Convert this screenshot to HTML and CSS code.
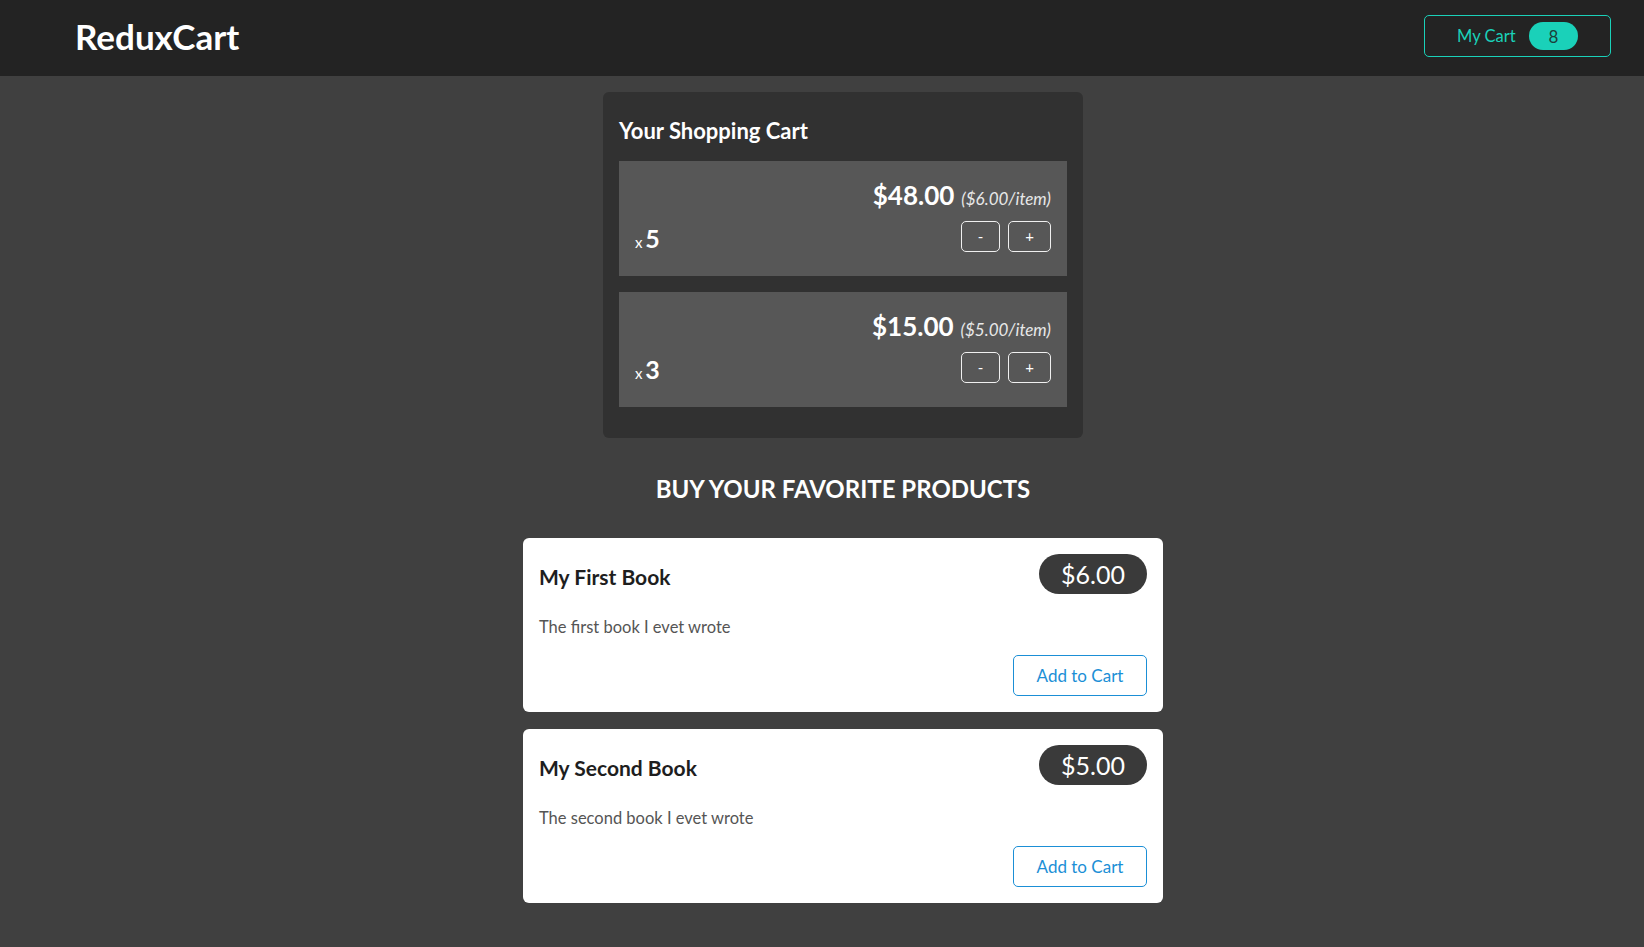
FILE: index.html
```html
<!DOCTYPE html>
<html lang="en">
<head>
<meta charset="utf-8">
<title>ReduxCart</title>
<link rel="stylesheet" href="styles.css">
</head>
<body>
<header class="topbar">
  <h1 class="logo">ReduxCart</h1>
  <button class="cart-toggle">
    <span>My Cart</span>
    <span class="badge">8</span>
  </button>
</header>
<main class="main">
  <section class="cart">
    <h2 class="cart-title">Your Shopping Cart</h2>
    <ul class="cart-list">
      <li class="cart-item">
        <div class="item-price-row">
          <span class="total">$48.00</span>
          <span class="per-item">($6.00/item)</span>
        </div>
        <div class="item-details">
          <div class="qty">x <span class="qty-num">5</span></div>
          <div class="actions">
            <button class="qbtn minus">-</button>
            <button class="qbtn plus">+</button>
          </div>
        </div>
      </li>
      <li class="cart-item">
        <div class="item-price-row">
          <span class="total">$15.00</span>
          <span class="per-item">($5.00/item)</span>
        </div>
        <div class="item-details">
          <div class="qty">x <span class="qty-num">3</span></div>
          <div class="actions">
            <button class="qbtn minus">-</button>
            <button class="qbtn plus">+</button>
          </div>
        </div>
      </li>
    </ul>
  </section>

  <section class="products">
    <h2 class="products-title">BUY YOUR FAVORITE PRODUCTS</h2>
    <ul class="product-list">
      <li class="product">
        <div class="product-head">
          <h3 class="product-name">My First Book</h3>
          <div class="price-pill">$6.00</div>
        </div>
        <p class="product-desc">The first book I evet wrote</p>
        <div class="product-actions">
          <button class="add-btn">Add to Cart</button>
        </div>
      </li>
      <li class="product">
        <div class="product-head">
          <h3 class="product-name">My Second Book</h3>
          <div class="price-pill">$5.00</div>
        </div>
        <p class="product-desc">The second book I evet wrote</p>
        <div class="product-actions">
          <button class="add-btn">Add to Cart</button>
        </div>
      </li>
    </ul>
  </section>
</main>
</body>
</html>
```
FILE: styles.css
```css
* { box-sizing: border-box; }
html, body { margin: 0; padding: 0; }
body {
  background: #404040;
  font-family: Lato, "Liberation Sans", sans-serif;
  color: #fff;
  min-height: 947px;
}
ul { list-style: none; margin: 0; padding: 0; }
button { font-family: inherit; cursor: pointer; }

.topbar {
  height: 76px;
  background: #232323;
  display: flex;
  align-items: center;
  justify-content: space-between;
  padding: 0 33px 0 75px;
}
.logo {
  margin: 0 0 3px;
  font-size: 35px;
  font-weight: 700;
  color: #fff;
  line-height: 1;
}
.cart-toggle {
  width: 187px;
  height: 42px;
  margin-bottom: 4px;
  background: transparent;
  border: 1px solid #1ad1b9;
  border-radius: 5px;
  color: #1ad1b9;
  font-size: 16.5px;
  display: flex;
  align-items: center;
  justify-content: space-between;
  padding: 0 32px 0 32px;
}
.badge {
  width: 49px;
  height: 28px;
  border-radius: 14px;
  background: #1ad1b9;
  color: #1c3f3a;
  font-size: 17px;
  display: flex;
  align-items: center;
  justify-content: center;
}

.main {
  padding-left: 42px;
  padding-bottom: 40px;
}

.cart {
  width: 480px;
  margin: 16px auto 0;
  background: #313131;
  border-radius: 6px;
  padding: 16px 16px 15px;
}
.cart-title {
  margin: 8px 0 15px;
  font-size: 22px;
  line-height: 30px;
  font-weight: 700;
}
.cart-list { display: flex; flex-direction: column; gap: 16px; margin-bottom: 16px; }
.cart-item {
  height: 115px;
  background: #575757;
  padding: 16px;
  display: flex;
  flex-direction: column;
}
.item-price-row {
  display: flex;
  justify-content: flex-end;
  align-items: baseline;
  gap: 7px;
  margin-top: 2px;
}
.total {
  font-size: 26px;
  line-height: 32px;
  font-weight: 700;
}
.per-item {
  font-size: 17px;
  font-style: italic;
  color: #e8e8e8;
}
.item-details {
  display: flex;
  justify-content: space-between;
  align-items: center;
  margin-top: 8px;
}
.qty {
  font-size: 15px;
  font-weight: 400;
  padding-top: 4px;
}
.qty-num {
  font-size: 25px;
  font-weight: 700;
  margin-left: -1px;
}
.actions { display: flex; gap: 8px; }
.qbtn {
  height: 31px;
  background: transparent;
  border: 1px solid #f0f0f0;
  border-radius: 5px;
  color: #fff;
  font-size: 15px;
  padding: 0;
}
.minus { width: 39px; }
.plus { width: 43px; }

.products { width: 640px; margin: 0 auto; }
.products-title {
  margin: 36px 0 34px;
  text-align: center;
  font-size: 24px;
  line-height: 30px;
  font-weight: 700;
}
.product-list { display: flex; flex-direction: column; gap: 17px; }
.product {
  background: #fff;
  border-radius: 6px;
  padding: 16px;
  color: #1e1e1e;
}
.product-head {
  height: 40px;
  display: flex;
  justify-content: space-between;
  align-items: center;
}
.product-name {
  margin: 4px 0 0;
  font-size: 21px;
  font-weight: 700;
}
.price-pill {
  width: 108px;
  height: 40px;
  border-radius: 20px;
  background: #3a3a3a;
  color: #fff;
  font-size: 25px;
  display: flex;
  align-items: center;
  justify-content: center;
}
.product-desc {
  margin: 21px 0 0;
  font-size: 16.5px;
  line-height: 24px;
  color: #555;
}
.product-actions {
  display: flex;
  justify-content: flex-end;
  margin-top: 16px;
}
.add-btn {
  width: 134px;
  height: 41px;
  background: #fff;
  border: 1px solid #1b8fd6;
  border-radius: 5px;
  color: #1b8fd6;
  font-size: 17px;
}
```
